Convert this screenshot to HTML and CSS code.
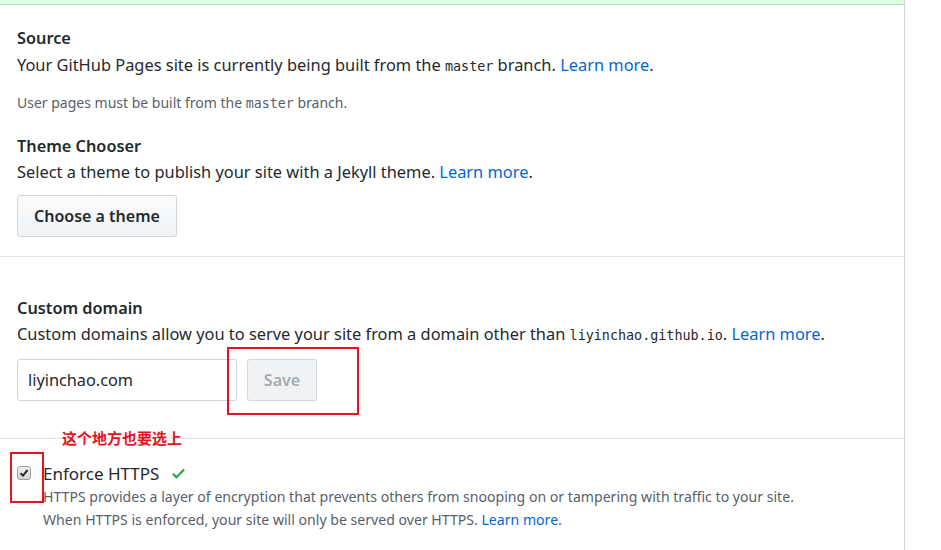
FILE: index.html
```html
<!DOCTYPE html>
<html lang="en">
<head>
<meta charset="utf-8">
<title>GitHub Pages</title>
<link rel="stylesheet" href="styles.css">
</head>
<body>
<div class="box">
  <div class="flash"></div>
  <section class="sec sec-source">
    <h3 class="title">Source</h3>
    <p class="desc desc-first">Your GitHub Pages site is currently being built from the <code>master</code> branch. <a href="#">Learn more</a>.</p>
    <p class="note">User pages must be built from the <code>master</code> branch.</p>
    <h3 class="title title-gap">Theme Chooser</h3>
    <p class="desc">Select a theme to publish your site with a Jekyll theme. <a href="#">Learn more</a>.</p>
    <button class="btn btn-theme">Choose a theme</button>
  </section>
  <section class="sec sec-domain">
    <h3 class="title">Custom domain</h3>
    <p class="desc">Custom domains allow you to serve your site from a domain other than <code>liyinchao.github.io</code>. <a href="#">Learn more</a>.</p>
    <div class="row">
      <input class="field" type="text" value="liyinchao.com">
      <button class="btn btn-save" disabled>Save</button>
    </div>
  </section>
  <section class="sec sec-https">
    <div class="check-row">
      <span class="cb"><svg width="10" height="10" viewBox="0 0 10 10"><path d="M1.5 5.2 L4 7.6 L8.6 2" fill="none" stroke="#2b2b2b" stroke-width="2"/></svg></span>
      <div class="check-body">
        <div class="check-title">Enforce HTTPS
          <svg class="ok" width="13" height="17" viewBox="0 0 12 16"><path fill="#28a745" fill-rule="evenodd" d="M12 5l-8 8-4-4 1.5-1.5L4 10l6.5-6.5L12 5z"/></svg>
        </div>
        <p class="help">HTTPS provides a layer of encryption that prevents others from snooping on or tampering with traffic to your site.<br>When HTTPS is enforced, your site will only be served over HTTPS. <a href="#">Learn more</a>.</p>
      </div>
    </div>
  </section>
</div>
<div class="mark mark-save"></div>
<div class="mark mark-check"></div>
<div class="annot">这个地方也要选上</div>
</body>
</html>
```
FILE: styles.css
```css
* { box-sizing: border-box; }
html, body { margin: 0; padding: 0; background: #fff; }
body {
  font-family: "Noto Sans", "Open Sans", sans-serif;
  color: #24292e;
  font-size: 16px;
  position: relative;
  height: 550px;
  overflow: hidden;
}
a { color: #0366d6; text-decoration: none; }
code {
  font-family: "DejaVu Sans Mono", "Liberation Mono", monospace;
  font-size: 13.4px;
  line-height: 1;
}

.box {
  width: 905px;
  height: 550px;
  border-right: 1px solid #d1d5da;
}
.flash {
  height: 5px;
  background: #dcffe4;
  border-bottom: 1px solid #b7e4c0;
}
.sec {
  padding-left: 17px;
  border-bottom: 1px solid #e1e4e8;
}
.sec-source { padding-top: 21px; padding-bottom: 19px; }
.sec-domain { padding-top: 39px; padding-bottom: 37px; }
.sec-https { padding-top: 23px; border-bottom: 0; }

.title {
  margin: 0;
  font-size: 16.3px;
  font-weight: 600;
  line-height: 25px;
}
.title-gap { margin-top: 21px; }
.desc {
  margin: 0;
  font-size: 16.4px;
  line-height: 26px;
}
.desc-first { margin-top: 1px; }
.note {
  margin: 15px 0 0;
  font-size: 14px;
  line-height: 20px;
  color: #586069;
}
.note code { font-size: 13.3px; }

.btn {
  display: block;
  height: 42px;
  padding: 0 16px;
  font-family: inherit;
  font-size: 16px;
  font-weight: 600;
  color: #24292e;
  background: linear-gradient(#fafbfc, #eff3f6);
  border: 1px solid #d1d5da;
  border-radius: 3px;
}
.btn-theme { margin-top: 10px; }
.row {
  margin-top: 12px;
  display: flex;
  gap: 10px;
}
.field {
  width: 220px;
  height: 42px;
  padding: 0 10px;
  font-family: inherit;
  font-size: 16.3px;
  color: #24292e;
  border: 1px solid #d1d5da;
  border-radius: 3px;
  outline: none;
}
.btn-save {
  width: 70px;
  padding: 0;
  color: #a3aab1;
  background: #eff3f6;
  border-color: #d5d8dc;
}

.check-row { display: flex; }
.cb {
  flex: none;
  margin: 4px 12px 0 0;
  width: 14px;
  height: 14px;
  display: flex;
  align-items: center;
  justify-content: center;
  background: linear-gradient(#eeeeee, #d6d6d6);
  border: 1px solid #a0a0a0;
  border-radius: 3px;
}
.check-title {
  font-size: 17px;
  line-height: 23px;
  display: flex;
  align-items: center;
  gap: 13px;
}
.help {
  margin: 0;
  font-size: 14.1px;
  line-height: 23px;
  color: #586069;
}

.mark {
  position: absolute;
  border: 2px solid #e81123;
}
.mark-save { left: 227px; top: 347px; width: 132px; height: 68px; }
.mark-check { left: 10px; top: 452px; width: 34px; height: 51px; }
.annot {
  position: absolute;
  left: 62px;
  top: 428px;
  font-family: "Noto Sans CJK SC", sans-serif;
  font-size: 15px;
  font-weight: 700;
  line-height: 20px;
  color: #e81123;
}
```
